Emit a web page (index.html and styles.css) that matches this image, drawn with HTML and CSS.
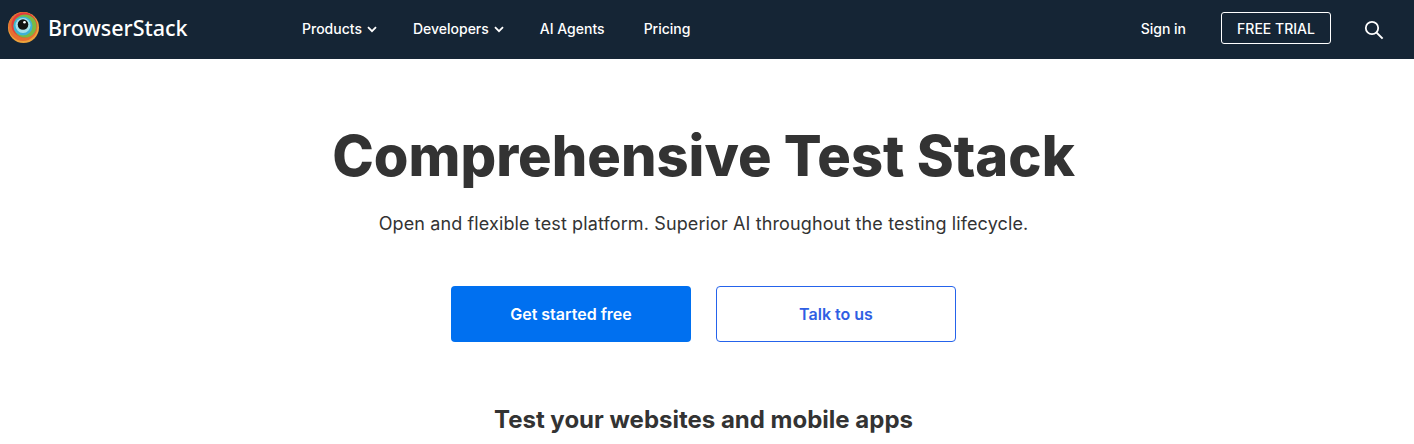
FILE: index.html
```html
<!DOCTYPE html>
<html lang="en">
<head>
  <meta charset="UTF-8">
  <meta name="viewport" content="width=device-width, initial-scale=1.0">
  <title>BrowserStack</title>
  <link rel="stylesheet" href="styles.css">
</head>
<body>
  <header class="site-header">
    <a class="logo" href="#">
      <svg class="logo-mark" viewBox="0 0 31 31" width="31" height="31" aria-hidden="true">
        <circle cx="15.5" cy="15.5" r="15.5" fill="#eda33b"/>
        <circle cx="15" cy="14.5" r="14.5" fill="#e66f32"/>
        <circle cx="16" cy="13" r="12.5" fill="#e4393e"/>
        <circle cx="17" cy="14" r="11.5" fill="#79b944"/>
        <circle cx="15" cy="14" r="9.5" fill="#3fb2d6"/>
        <circle cx="15" cy="13.5" r="7.5" fill="#a6e0ea"/>
        <circle cx="15" cy="12.5" r="5.3" fill="#111"/>
        <circle cx="16.5" cy="10.3" r="1.3" fill="#fff"/>
      </svg>
      <span class="logo-text">BrowserStack</span>
    </a>
    <nav class="main-nav">
      <a class="nav-link" href="#">Products
        <svg class="chevron" viewBox="0 0 10 7" width="10" height="7"><path d="M1 1.2 5 5.2 9 1.2" fill="none" stroke="#fff" stroke-width="1.8"/></svg>
      </a>
      <a class="nav-link" href="#">Developers
        <svg class="chevron" viewBox="0 0 10 7" width="10" height="7"><path d="M1 1.2 5 5.2 9 1.2" fill="none" stroke="#fff" stroke-width="1.8"/></svg>
      </a>
      <a class="nav-link" href="#">AI Agents</a>
      <a class="nav-link nav-link-last" href="#">Pricing</a>
    </nav>
    <div class="header-right">
      <a class="nav-link" href="#">Sign in</a>
      <a class="trial-btn" href="#">FREE TRIAL</a>
      <svg class="search-icon" viewBox="0 0 20 20" width="20" height="20" aria-hidden="true">
        <circle cx="8" cy="8" r="6.2" fill="none" stroke="#fff" stroke-width="1.8"/>
        <path d="M12.6 12.6 18.6 18.6" stroke="#fff" stroke-width="2"/>
      </svg>
    </div>
  </header>

  <main class="hero">
    <h1>Comprehensive Test Stack</h1>
    <p class="hero-sub">Open and flexible test platform. Superior AI throughout the testing lifecycle.</p>
    <div class="hero-actions">
      <a class="btn btn-primary" href="#">Get started free</a>
      <a class="btn btn-outline" href="#">Talk to us</a>
    </div>
    <h2>Test your websites and mobile apps</h2>
  </main>
</body>
</html>
```

FILE: styles.css
```css
/* Base styles */
body {
  font-family: Inter, "Liberation Sans", sans-serif;
  margin: 0;
  height: 444px;
  overflow: hidden;
  background-color: #fff;
  color: #333;
}

a {
  text-decoration: none;
}

/* Header */
.site-header {
  display: flex;
  align-items: center;
  box-sizing: border-box;
  height: 59px;
  padding: 0 30px 3px 8px;
  background-color: #152535;
}

.logo {
  display: flex;
  align-items: center;
  gap: 9px;
  width: 294px;
  margin-bottom: 2px;
}

.logo-mark {
  display: block;
}

.logo-text {
  font-family: "Noto Sans", sans-serif;
  font-size: 21.5px;
  font-weight: 500;
  color: #fff;
}

.main-nav {
  display: flex;
  align-items: center;
  gap: 36px;
}

.nav-link {
  display: flex;
  align-items: center;
  gap: 5px;
  font-size: 14px;
  font-weight: 500;
  color: #fff;
}

.nav-link-last {
  margin-left: 3px;
}

.chevron {
  margin-top: 2px;
}

.header-right {
  display: flex;
  align-items: center;
  margin-left: auto;
}

.trial-btn {
  display: flex;
  align-items: center;
  justify-content: center;
  box-sizing: border-box;
  width: 110px;
  height: 32px;
  margin: 0 33px 0 35px;
  border: 1px solid #fff;
  border-radius: 3px;
  font-size: 14px;
  font-weight: 500;
  color: #fff;
}

.search-icon {
  margin-top: 3px;
}

/* Hero */
.hero {
  display: flex;
  flex-direction: column;
  align-items: center;
  padding: 61px 7px 0 0;
}

.hero h1 {
  margin: 0;
  font-size: 56px;
  line-height: 72px;
  font-weight: 800;
  color: #333;
}

.hero-sub {
  margin: 19px 0 0;
  font-size: 18px;
  line-height: 26px;
  letter-spacing: 0.12px;
  color: #333;
}

.hero-actions {
  display: flex;
  gap: 25px;
  margin-top: 49px;
}

.btn {
  display: flex;
  align-items: center;
  justify-content: center;
  box-sizing: border-box;
  width: 240px;
  height: 56px;
  border-radius: 4px;
  font-size: 16px;
  font-weight: 600;
}

.btn-primary {
  background-color: #0070f0;
  color: #fff;
}

.btn-outline {
  background-color: #fff;
  border: 1px solid #2563eb;
  color: #2f5fe3;
}

.hero h2 {
  margin: 62px 0 0;
  font-size: 24px;
  line-height: 32px;
  font-weight: 700;
  color: #333;
}
```
